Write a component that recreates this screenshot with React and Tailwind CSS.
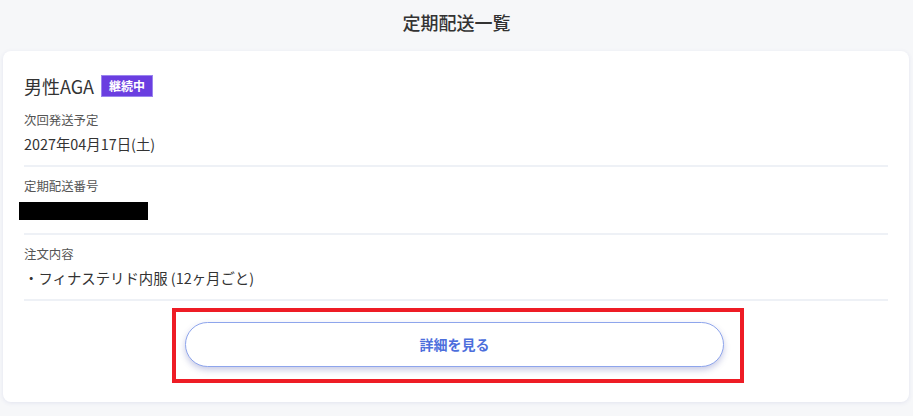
import React from 'react';

const FONT = { fontFamily: '"Noto Sans CJK JP", "Noto Sans", sans-serif' };

function Divider() {
  return <div className="h-[2px] bg-[#eef1f6]" />;
}

export default function App() {
  return (
    <div className="h-[416px] w-[913px] overflow-hidden bg-[#f6f7f9] text-[#333]" style={FONT}>
      <div className="flex h-[51px] items-center justify-center pb-[6px] text-[18px] font-medium text-[#333]">
        定期配送一覧
      </div>

      <div className="ml-[3px] mr-[4px] rounded-lg bg-white px-[21px] pt-[24px] pb-[19px] shadow-[0_1px_4px_rgba(90,100,170,0.12)]">
        <div className="flex h-[22px] items-center">
          <span className="text-[18px] leading-[22px] text-[#333]">男性AGA</span>
          <span className="ml-[7px] flex h-[22px] items-center border border-[#9a85ef] bg-[#6a3ee0] px-[7px] text-[12px] font-bold text-white">
            継続中
          </span>
        </div>

        <div className="mt-[14px] text-[12.4px] leading-[18px] text-[#555]">次回発送予定</div>
        <div className="mt-[4px] text-[14.4px] leading-[21px] text-[#333]">2027年04月17日(土)</div>
        <div className="mt-[11px]"><Divider /></div>

        <div className="mt-[10px] text-[12.4px] leading-[18px] text-[#555]">定期配送番号</div>
        <div className="-ml-[5px] mt-[7px] h-[18px] w-[129px] bg-black" />
        <div className="mt-[13px]"><Divider /></div>

        <div className="mt-[10px] text-[12.4px] leading-[18px] text-[#555]">注文内容</div>
        <div className="mt-[4px] text-[14.4px] leading-[21px] text-[#333]">・フィナステリド内服 (12ヶ月ごと)</div>
        <div className="mt-[11px]"><Divider /></div>

        <div className="ml-[148px] mt-[7px] h-[75px] w-[572px] border-4 border-[#ee1c25] pl-[9px] pt-[10px]">
          <button className="flex h-[45px] w-[539px] items-center justify-center rounded-full border border-[#8ea5ec] bg-white text-[14px] font-bold text-[#4d6fdc] shadow-[0_3px_6px_rgba(70,80,170,0.3)]">
            詳細を見る
          </button>
        </div>
      </div>
    </div>
  );
}
